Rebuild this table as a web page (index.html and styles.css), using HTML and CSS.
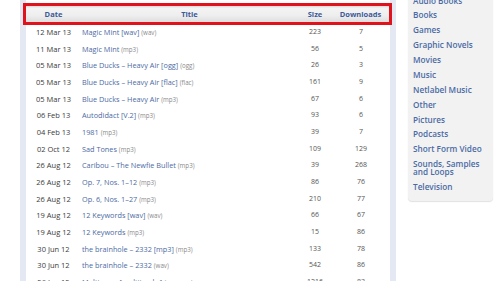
FILE: index.html
```html
<!DOCTYPE html>
<html>
<head>
<meta charset="utf-8">
<link rel="stylesheet" href="styles.css">
</head>
<body>
<div class="page">
  <div class="main">
    <div class="thead">
      <div class="th c-date">Date</div>
      <div class="th c-title">Title</div>
      <div class="th c-size">Size</div>
      <div class="th c-dl">Downloads</div>
    </div>
    <div class="row"><div class="c-date">12 Mar 13</div><div class="c-title"><a>Magic Mint [wav]</a> <span class="fmt">(wav)</span></div><div class="c-size">223</div><div class="c-dl">7</div></div>
    <div class="row"><div class="c-date">11 Mar 13</div><div class="c-title"><a>Magic Mint</a> <span class="fmt">(mp3)</span></div><div class="c-size">56</div><div class="c-dl">5</div></div>
    <div class="row"><div class="c-date">05 Mar 13</div><div class="c-title"><a>Blue Ducks – Heavy Air [ogg]</a> <span class="fmt">(ogg)</span></div><div class="c-size">26</div><div class="c-dl">3</div></div>
    <div class="row"><div class="c-date">05 Mar 13</div><div class="c-title"><a>Blue Ducks – Heavy Air [flac]</a> <span class="fmt">(flac)</span></div><div class="c-size">161</div><div class="c-dl">9</div></div>
    <div class="row"><div class="c-date">05 Mar 13</div><div class="c-title"><a>Blue Ducks – Heavy Air</a> <span class="fmt">(mp3)</span></div><div class="c-size">67</div><div class="c-dl">6</div></div>
    <div class="row"><div class="c-date">06 Feb 13</div><div class="c-title"><a>Autodidact [V.2]</a> <span class="fmt">(mp3)</span></div><div class="c-size">93</div><div class="c-dl">6</div></div>
    <div class="row"><div class="c-date">04 Feb 13</div><div class="c-title"><a>1981</a> <span class="fmt">(mp3)</span></div><div class="c-size">39</div><div class="c-dl">7</div></div>
    <div class="row"><div class="c-date">02 Oct 12</div><div class="c-title"><a>Sad Tones</a> <span class="fmt">(mp3)</span></div><div class="c-size">109</div><div class="c-dl">129</div></div>
    <div class="row"><div class="c-date">26 Aug 12</div><div class="c-title"><a>Caribou – The Newfie Bullet</a> <span class="fmt">(mp3)</span></div><div class="c-size">39</div><div class="c-dl">268</div></div>
    <div class="row"><div class="c-date">26 Aug 12</div><div class="c-title"><a>Op. 7, Nos. 1–12</a> <span class="fmt">(mp3)</span></div><div class="c-size">86</div><div class="c-dl">76</div></div>
    <div class="row"><div class="c-date">26 Aug 12</div><div class="c-title"><a>Op. 6, Nos. 1–27</a> <span class="fmt">(mp3)</span></div><div class="c-size">210</div><div class="c-dl">77</div></div>
    <div class="row"><div class="c-date">19 Aug 12</div><div class="c-title"><a>12 Keywords [wav]</a> <span class="fmt">(wav)</span></div><div class="c-size">66</div><div class="c-dl">67</div></div>
    <div class="row"><div class="c-date">19 Aug 12</div><div class="c-title"><a>12 Keywords</a> <span class="fmt">(mp3)</span></div><div class="c-size">15</div><div class="c-dl">86</div></div>
    <div class="row"><div class="c-date">30 Jun 12</div><div class="c-title"><a>the brainhole – 2332 [mp3]</a> <span class="fmt">(mp3)</span></div><div class="c-size">133</div><div class="c-dl">78</div></div>
    <div class="row"><div class="c-date">30 Jun 12</div><div class="c-title"><a>the brainhole – 2332</a> <span class="fmt">(wav)</span></div><div class="c-size">542</div><div class="c-dl">86</div></div>
    <div class="row"><div class="c-date">26 Jun 12</div><div class="c-title"><a>Multiverse [multitracks]</a> <span class="fmt">(wav, ogg)</span></div><div class="c-size">1216</div><div class="c-dl">83</div></div>
  </div>
  <div class="side">
    <a class="cat">Audio Books</a>
    <a class="cat">Books</a>
    <a class="cat">Games</a>
    <a class="cat">Graphic Novels</a>
    <a class="cat">Movies</a>
    <a class="cat">Music</a>
    <a class="cat">Netlabel Music</a>
    <a class="cat">Other</a>
    <a class="cat">Pictures</a>
    <a class="cat">Podcasts</a>
    <a class="cat">Short Form Video</a>
    <a class="cat">Sounds, Samples and Loops</a>
    <a class="cat">Television</a>
  </div>
</div>
</body>
</html>
```
FILE: styles.css
```css
html, body {
  margin: 0;
  padding: 0;
  background: #ffffff;
  overflow: hidden;
}
body {
  font-family: "Open Sans", "DejaVu Sans", sans-serif;
  width: 500px;
  height: 281px;
}
.page {
  display: flex;
  align-items: flex-start;
  gap: 12px;
}
.main {
  margin-left: 20px;
  width: 364px;
  border-left: 6px solid #e3e8f3;
  border-right: 6px solid #e3e8f3;
  background: #ffffff;
  padding-top: 3px;
  height: 300px;
}
.thead {
  position: relative;
  z-index: 2;
  display: grid;
  grid-template-columns: 55px 217px 34px 57px;
  margin: 0 -2px -1px -3px;
  height: 16px;
  border: 3px solid #e0121c;
  background: linear-gradient(#d6d6d6 0, #f4f4f4 2px, #eeeeee 60%, #dedede 100%);
}
.th {
  font-weight: 700;
  font-size: 7.5px;
  color: #3b5a98;
  line-height: 16px;
  text-align: center;
}
.row {
  display: grid;
  grid-template-columns: 55px 217px 34px 58px;
  height: 16.67px;
  line-height: 16.67px;
  font-size: 7.5px;
  color: #444444;
  white-space: nowrap;
}
.c-date, .c-size, .c-dl { text-align: center; }
.row .c-title { padding-left: 1px; text-align: left; }
.row .c-date { color: #3a3a3a; }
.row .c-size, .row .c-dl { color: #555555; font-size: 7px; }
.row a { color: #4d6aa3; font-size: 7.3px; }
.fmt { color: #8a8a8a; font-size: 6.2px; }
.side {
  width: 85px;
  box-sizing: border-box;
  margin-top: -6.85px;
  padding: 0 0 6.5px 5px;
  background: #f2f2f2;
  border-radius: 0 0 4px 4px;
  box-shadow: 0 1px 1px rgba(0,0,0,0.12);
  display: flex;
  flex-direction: column;
}
.cat {
  display: block;
  font-size: 8.2px;
  font-weight: 600;
  color: #4a6aa4;
  line-height: 8px;
  padding: 3.45px 0;
}
```
